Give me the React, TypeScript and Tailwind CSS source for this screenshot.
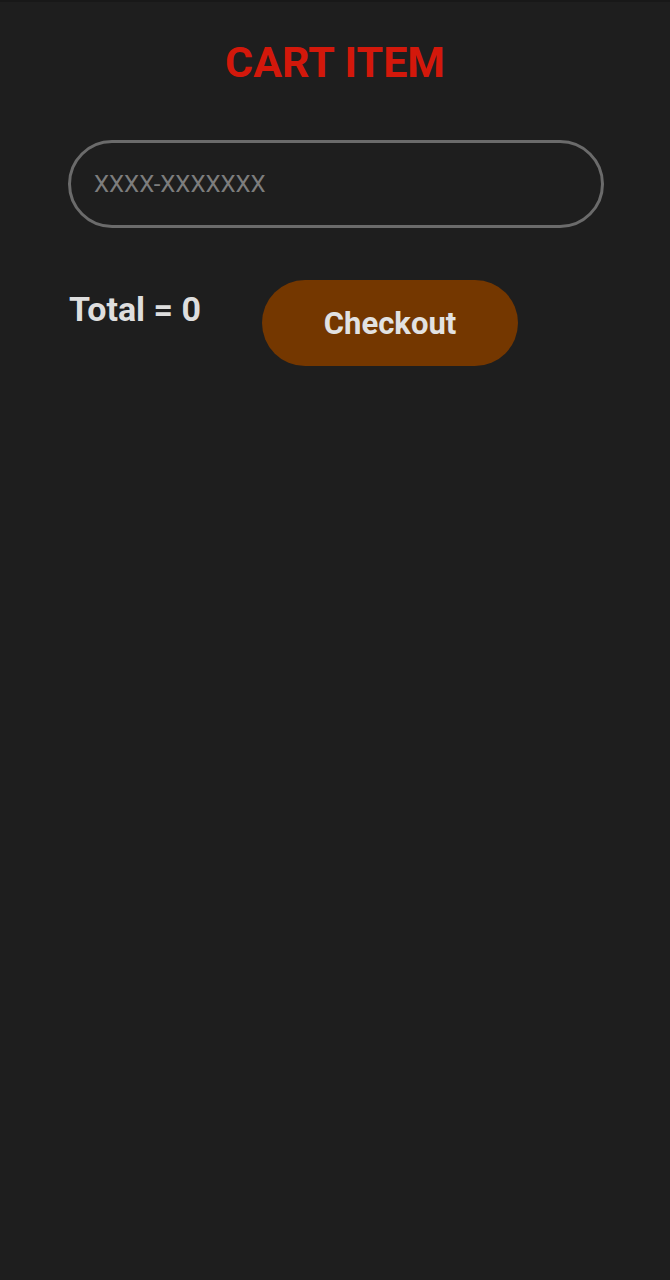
export default function App() {
  return (
    <div
      className="min-h-[1280px] bg-[#1e1e1e] text-white border-t-2 border-[#181818]"
      style={{ fontFamily: "Roboto, 'Liberation Sans', sans-serif" }}
    >
      <h1 className="pt-[30px] text-center text-[43px] leading-[60px] font-bold text-[#d3180b]">
        CART ITEM
      </h1>

      <div className="mt-[48px] pl-[68px] pr-[66px]">
        <input
          type="text"
          placeholder="XXXX-XXXXXXX"
          className="w-full h-[88px] rounded-full border-[3px] border-[#6b6b6b] bg-transparent pl-[23px] text-[24px] text-[#dedede] placeholder:text-[#7d7d7d] outline-none"
        />
      </div>

      <div className="mt-[52px] flex items-start pl-[69px]">
        <p className="mt-[6px] text-[34px] leading-[46px] font-bold text-[#dedede]">Total = 0</p>
        <button className="ml-[61px] w-[256px] h-[86px] pt-[2px] rounded-full bg-[#743700] text-[31px] font-bold text-[#e2e2e2]">
          Checkout
        </button>
      </div>
    </div>
  );
}
